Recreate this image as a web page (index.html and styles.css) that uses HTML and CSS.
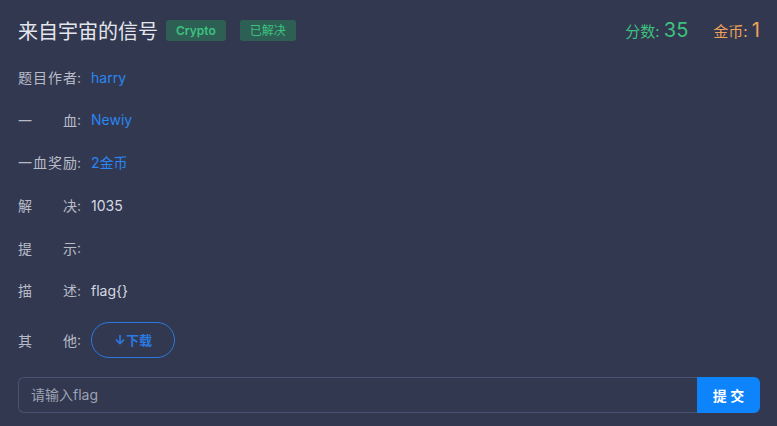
FILE: index.html
```html
<!DOCTYPE html>
<html lang="zh-CN">
<head>
    <meta charset="UTF-8">
    <title>来自宇宙的信号</title>
    <link rel="stylesheet" href="styles.css">
</head>
<body>
    <div class="panel">
        <div class="header">
            <h1 class="title">来自宇宙的信号</h1>
            <span class="tag tag-bold">Crypto</span>
            <span class="tag">已解决</span>
            <div class="stats">
                <span class="score">分数: <b>35</b></span>
                <span class="coin">金币: <b>1</b></span>
            </div>
        </div>
        <div class="row"><span class="label">题目作者</span>:<span class="value link">harry</span></div>
        <div class="row"><span class="label">一血</span>:<span class="value link">Newiy</span></div>
        <div class="row"><span class="label">一血奖励</span>:<span class="value link">2金币</span></div>
        <div class="row"><span class="label">解决</span>:<span class="value">1035</span></div>
        <div class="row"><span class="label">提示</span>:<span class="value"></span></div>
        <div class="row"><span class="label">描述</span>:<span class="value">flag{}</span></div>
        <div class="row row-other"><span class="label">其他</span>:<span class="value"><button class="download">↓下载</button></span></div>
        <div class="submit">
            <input type="text" class="flag-input" placeholder="请输入flag">
            <button class="submit-btn">提 交</button>
        </div>
    </div>
</body>
</html>
```

FILE: styles.css
```css
body {
    margin: 0;
    background-color: #323850;
    font-family: Inter, "Noto Sans CJK SC", sans-serif;
    color: #b8bcc8;
}
.panel {
    padding: 0 17px 0 18px;
}
.header {
    display: flex;
    align-items: center;
    height: 52px;
    padding-top: 4px;
}
.title {
    margin: 0 8px 0 0;
    font-size: 20px;
    font-weight: 400;
    color: #e4e6ee;
}
.tag {
    display: inline-block;
    height: 21px;
    line-height: 21px;
    padding: 0 10px;
    margin-right: 14px;
    border-radius: 3px;
    background-color: #2e5f55;
    color: #3cc27e;
    font-size: 12px;
}
.tag-bold {
    font-weight: 600;
}
.stats {
    margin-left: auto;
    display: flex;
    align-items: baseline;
    gap: 25px;
    font-size: 15px;
}
.stats b {
    font-weight: 400;
    font-size: 20px;
}
.score {
    color: #3cc27e;
}
.coin {
    color: #eea15a;
}
.row {
    display: flex;
    align-items: center;
    height: 42.6px;
    font-size: 14px;
}
.row-other {
    height: 56px;
}
.label {
    display: inline-block;
    width: 59px;
    text-align: justify;
    text-align-last: justify;
}
.value {
    margin-left: 10px;
    color: #d6d9e2;
}
.link {
    color: #2a86f0;
}
.download {
    width: 84px;
    height: 36px;
    border: 1px solid #2a7ae0;
    border-radius: 18px;
    background-color: transparent;
    color: #2a7ae0;
    font-family: Inter, "Noto Sans CJK SC", sans-serif;
    font-size: 13px;
    font-weight: 700;
    cursor: pointer;
}
.submit {
    display: flex;
    margin-top: 9px;
    height: 36px;
}
.flag-input {
    flex: 1;
    box-sizing: border-box;
    height: 36px;
    padding: 0 12px;
    border: 1px solid #4a5272;
    border-right: none;
    border-radius: 6px 0 0 6px;
    background-color: #323850;
    color: #d6d9e2;
    font-family: Inter, "Noto Sans CJK SC", sans-serif;
    font-size: 14px;
    outline: none;
}
.flag-input::placeholder {
    color: #9ea3b3;
}
.submit-btn {
    width: 63px;
    height: 36px;
    border: none;
    border-radius: 0 6px 6px 0;
    background-color: #0d84fb;
    color: #fff;
    font-family: Inter, "Noto Sans CJK SC", sans-serif;
    font-size: 14px;
    font-weight: 700;
    cursor: pointer;
}
```
